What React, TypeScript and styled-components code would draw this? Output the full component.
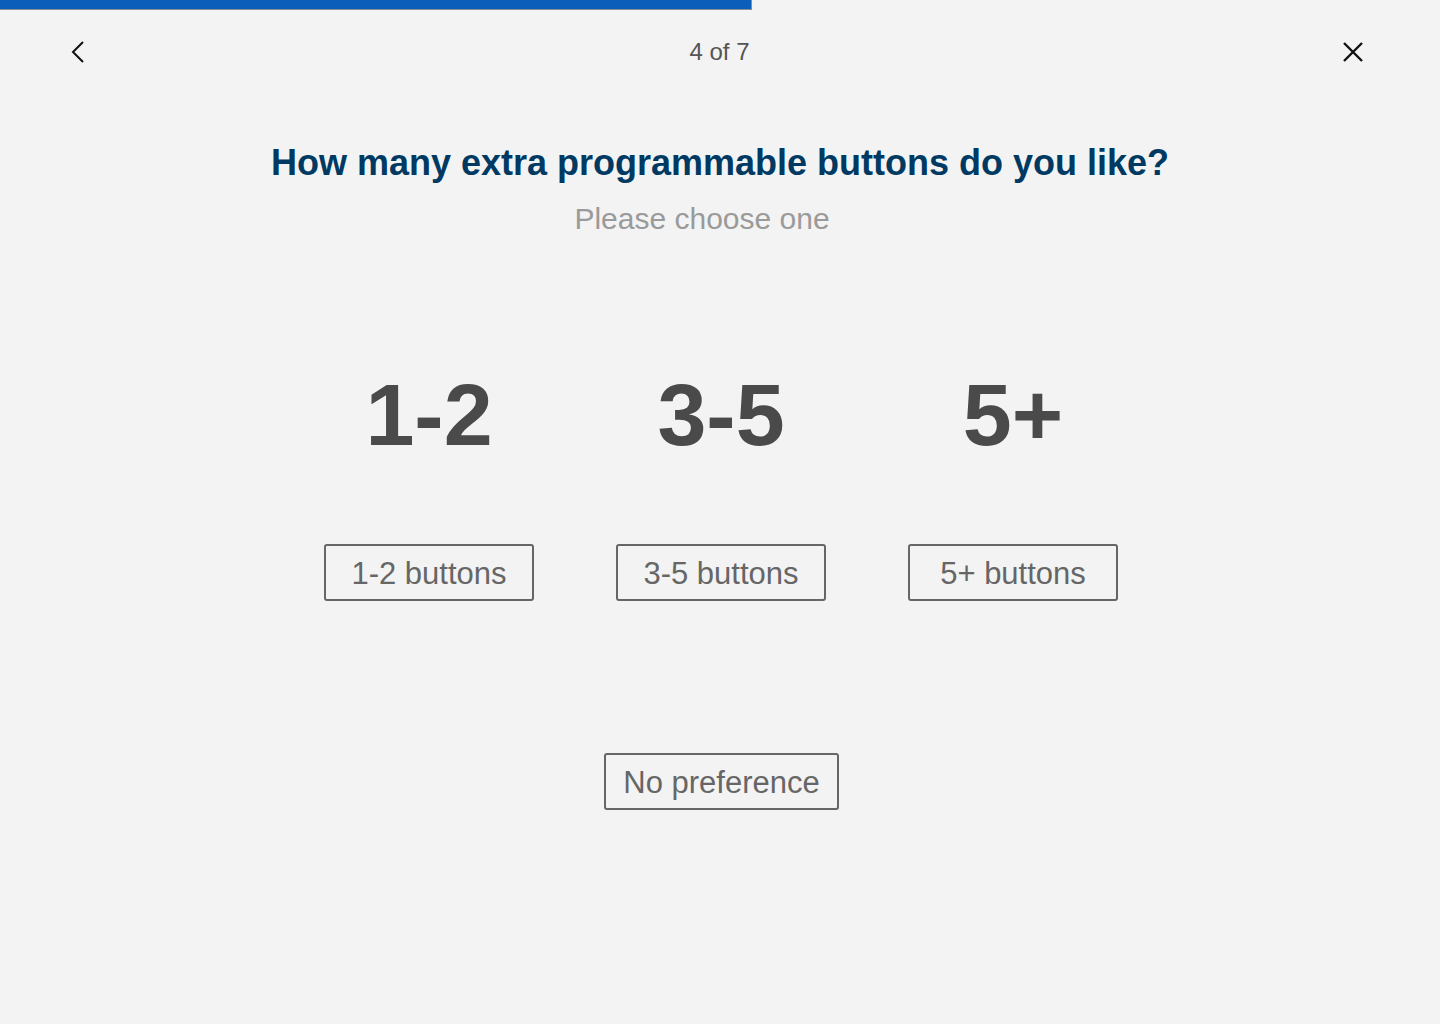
import React, { ReactElement } from 'react';
import styled, { createGlobalStyle } from 'styled-components';

const options = [
  { big: '1-2', label: '1-2 buttons' },
  { big: '3-5', label: '3-5 buttons' },
  { big: '5+', label: '5+ buttons' },
];

const step = 4;
const total = 7;

export default function App(): ReactElement {
  return (
    <Page>
      <GlobalStyle />
      <Progress>
        <ProgressFill style={{ width: `${(step / total) * 91.3}%` }} />
      </Progress>
      <Header>
        <IconButton aria-label='Back'>
          <svg width='14' height='22' viewBox='0 0 14 22' fill='none'>
            <path d='M12 1L2 11l10 10' stroke='#111' strokeWidth='2' />
          </svg>
        </IconButton>
        <Step>
          {step} of {total}
        </Step>
        <IconButton aria-label='Close'>
          <svg width='22' height='22' viewBox='0 0 22 22' fill='none'>
            <path d='M2 2l18 18M20 2L2 20' stroke='#111' strokeWidth='2.4' />
          </svg>
        </IconButton>
      </Header>
      <Title>How many extra programmable buttons do you like?</Title>
      <Subtitle>Please choose one</Subtitle>
      <Options>
        {options.map((o) => (
          <Option key={o.big}>
            <BigNumber>{o.big}</BigNumber>
            <ChoiceButton>{o.label}</ChoiceButton>
          </Option>
        ))}
      </Options>
      <Footer>
        <ChoiceButton wide>No preference</ChoiceButton>
      </Footer>
    </Page>
  );
}

const GlobalStyle = createGlobalStyle`
  html, body {
    margin: 0;
    padding: 0;
    background: #f3f3f3;
  }
  body {
    font-family: 'Liberation Sans', Arial, Helvetica, sans-serif;
  }
`;

const Page = styled.div`
  width: 1440px;
  height: 1024px;
  background: #f3f3f3;
  display: flex;
  flex-direction: column;
  align-items: center;
`;

const Progress = styled.div`
  width: 100%;
  height: 11px;
`;

const ProgressFill = styled.div`
  height: 9px;
  background: #0b5fbb;
  border: 1px solid #8a8f96;
  border-left: none;
  border-top: none;
`;

const Header = styled.div`
  width: 100%;
  box-sizing: border-box;
  height: 80px;
  margin-top: -11px;
  padding: 23px 75px 0 66px;
  display: flex;
  align-items: center;
  justify-content: space-between;
`;

const IconButton = styled.button`
  width: 24px;
  height: 24px;
  padding: 0;
  border: none;
  background: none;
  display: flex;
  align-items: center;
  justify-content: center;
  cursor: pointer;
`;

const Step = styled.div`
  font-size: 24px;
  color: #555;
  padding-left: 8px;
`;

const Title = styled.h1`
  margin: 60px 0 0;
  font-size: 36px;
  font-weight: bold;
  color: #003a63;
  line-height: 46px;
`;

const Subtitle = styled.p`
  margin: 17px 0 0;
  padding-right: 36px;
  font-size: 30px;
  color: #9a9a9a;
  line-height: 32px;
`;

const Options = styled.div`
  margin-top: 130px;
  display: grid;
  grid-template-columns: repeat(3, 292px);
  padding-left: 2px;
`;

const Option = styled.div`
  display: flex;
  flex-direction: column;
  align-items: center;
`;

const BigNumber = styled.div`
  font-size: 88px;
  font-weight: bold;
  color: #4a4a4a;
  line-height: 100px;
  margin-bottom: 79px;
`;

const ChoiceButton = styled.button<{ wide?: boolean }>`
  width: ${({ wide }): string => (wide ? '235px' : '210px')};
  height: 57px;
  box-sizing: border-box;
  border: 2px solid #666;
  border-radius: 3px;
  background: transparent;
  font-family: 'Liberation Sans', Arial, Helvetica, sans-serif;
  font-size: 31px;
  color: #666;
  padding: 2px 0 0;
  cursor: pointer;
`;

const Footer = styled.div`
  margin-top: 152px;
  padding-left: 3px;
`;
